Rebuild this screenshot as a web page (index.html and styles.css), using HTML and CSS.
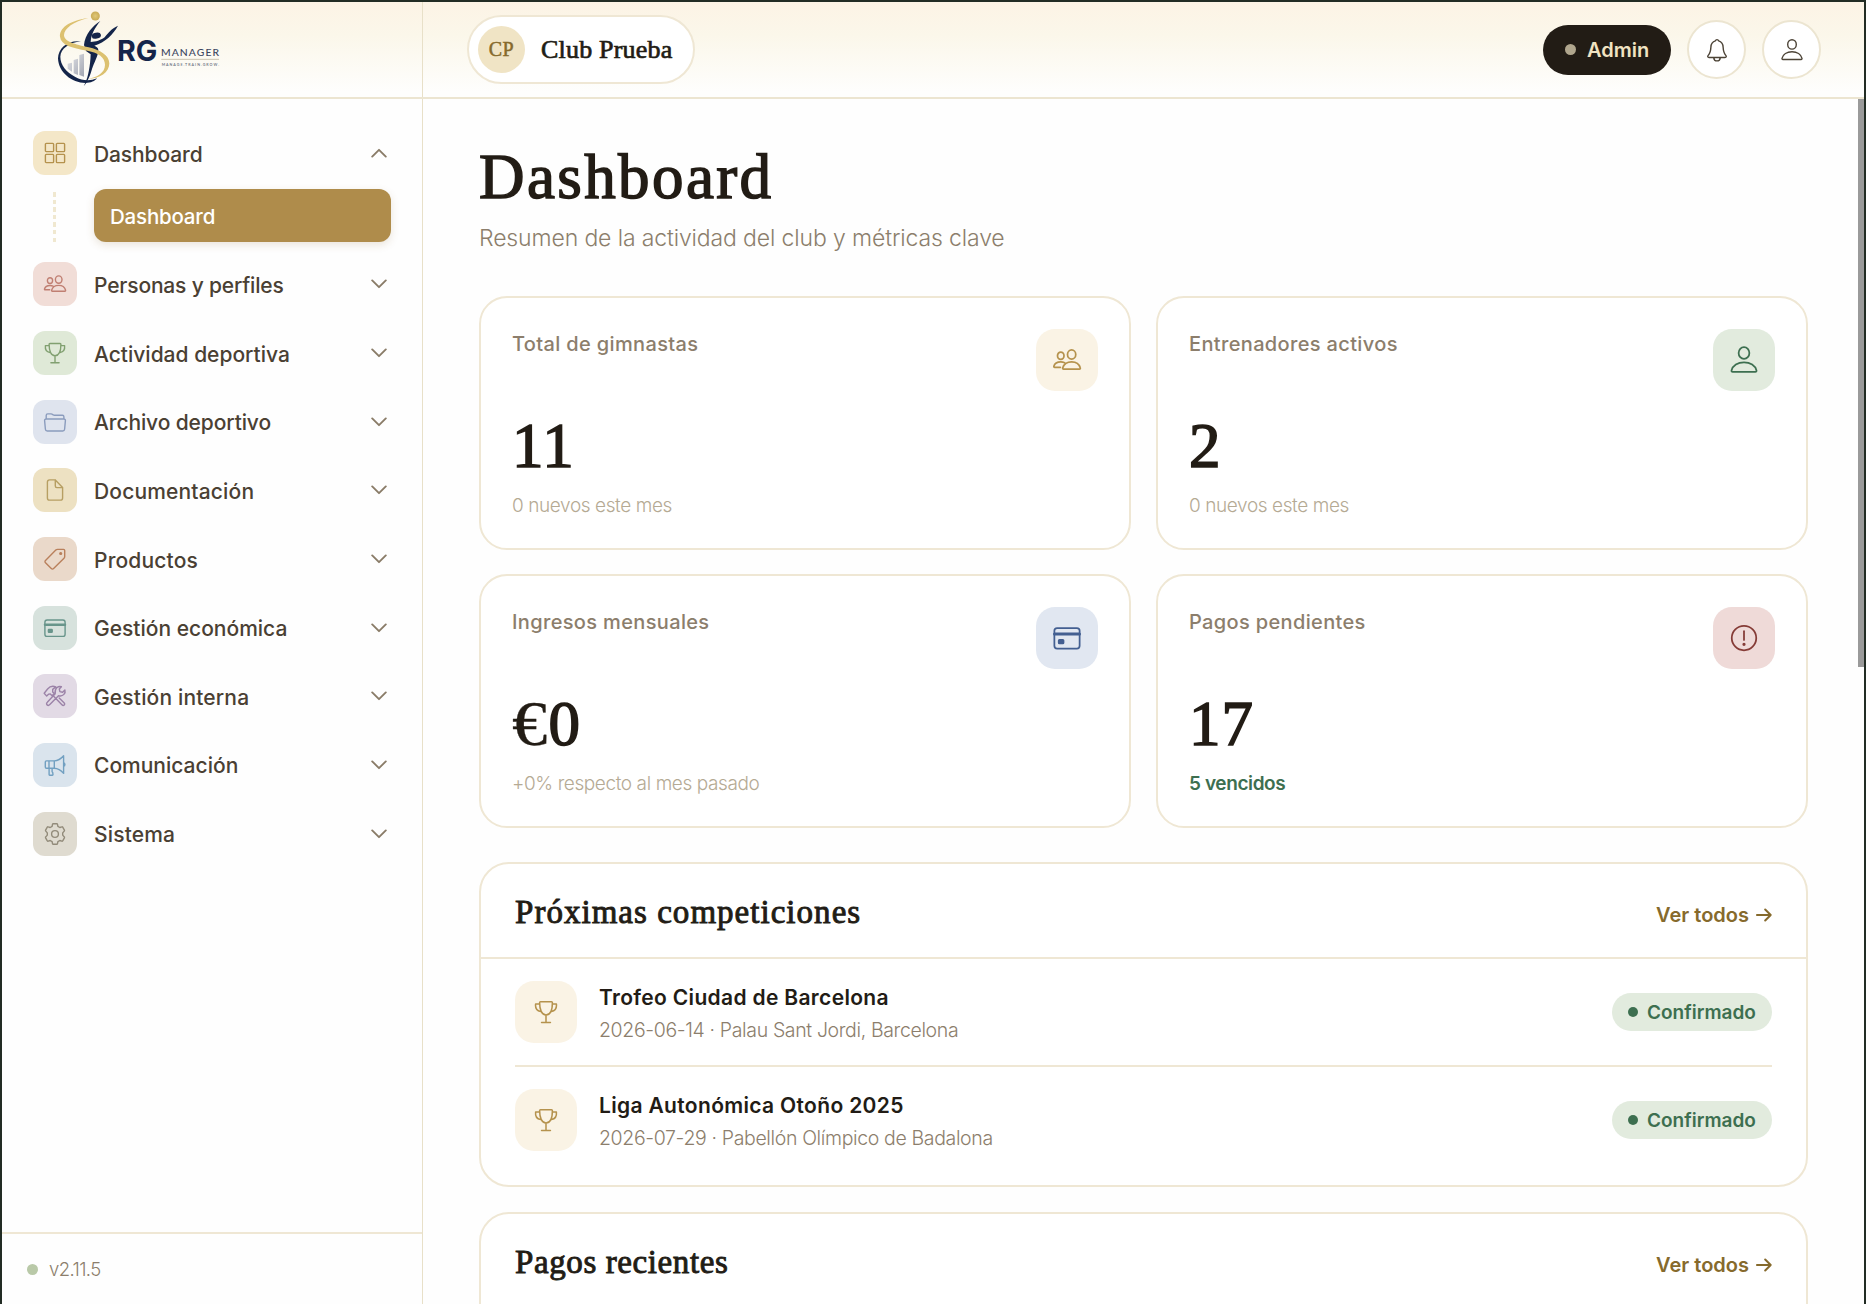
FILE: index.html
```html
<!DOCTYPE html>
<html lang="es">
<head>
<meta charset="utf-8">
<title>RG Manager · Dashboard</title>
<link rel="stylesheet" href="styles.css">
</head>
<body>
<svg width="0" height="0" class="sprite" aria-hidden="true">
  <defs>
    <symbol id="i-grid" viewBox="0 0 24 24"><rect x="2.4" y="2.4" width="8.2" height="8.2" rx=".9"/><rect x="13.4" y="2.4" width="8.2" height="8.2" rx=".9"/><rect x="2.4" y="13.4" width="8.2" height="8.2" rx=".9"/><rect x="13.4" y="13.4" width="8.2" height="8.2" rx=".9"/></symbol>
    <symbol id="i-people" viewBox="0 0 24 24"><ellipse cx="15.7" cy="7.6" rx="3.3" ry="3.7"/><ellipse cx="7" cy="8.6" rx="2.6" ry="2.9"/><path d="M9.3 19.2c-.6 0-.9-.4-.7-1 .9-2.900 3.700-4.800 7.100-4.800s6.100 1.900 6.900 4.800c.2.600-.1 1-.7 1zM10.100 14.200a7 7 0 0 0-3.100-.7c-2.700 0-4.900 1.400-5.500 3.500-.1.500.1.800.6.800h4.600"/></symbol>
    <symbol id="i-person" viewBox="0 0 24 24"><ellipse cx="12" cy="6.400" rx="4.300" ry="4.700"/><path d="M2.900 21.500c-.7 0-1-.5-.9-1.100.9-3.900 5-6.600 10-6.600s9.100 2.700 10 6.600c.1.600-.2 1.100-.9 1.100z"/></symbol>
    <symbol id="i-trophy" viewBox="0 0 24 24"><path d="M6.100 3.300c0-.5.300-.8.800-.8h10.200c.5 0 .8.300.8.800 0 6.500-1.900 11.500-5.900 11.500S6.100 9.800 6.100 3.300zM12 14.800v6.900M7.900 21.700h8.200M6.200 4.600H2.400C2 8.300 3.600 11 7 11.500M17.800 4.600h3.800c.4 3.700-1.200 6.400-4.600 6.900"/></symbol>
    <symbol id="i-folder" viewBox="0 0 24 24"><path d="M3.200 9V5.400c0-.9.600-1.500 1.500-1.500h3.400c.6 0 .9.100 1.400.5l.6.400c.4.300.8.400 1.300.4h8c.9 0 1.500.6 1.500 1.500V9M3.100 9h17.800c1 0 1.600.7 1.500 1.600l-.8 8.700c-.1 1.100-.8 1.700-1.800 1.700H4.200c-1 0-1.700-.6-1.800-1.700l-.8-8.700C1.500 9.700 2.100 9 3.100 9z"/></symbol>
    <symbol id="i-doc" viewBox="0 0 24 24"><path d="M12.300 1.900H6.600c-1.300 0-2.200.9-2.200 2.200v15.800c0 1.300.9 2.200 2.200 2.200h10.800c1.300 0 2.200-.9 2.200-2.200V9.600zM12.300 1.900v6.200c0 .9.600 1.500 1.500 1.500h5.800z"/></symbol>
    <symbol id="i-tag" viewBox="0 0 24 24"><path d="M21.700 3.500v6.100c0 .8-.2 1.200-.7 1.700L10.600 21.600c-.7.700-1.600.7-2.300 0l-5.800-5.800c-.7-.7-.7-1.600 0-2.300L12.800 3.100c.5-.5.900-.7 1.700-.7h6.100c.7 0 1.100.4 1.100 1.100z"/><circle cx="17.700" cy="6.500" r=".9" class="solid"/></symbol>
    <symbol id="i-card" viewBox="0 0 24 24"><rect x="1.900" y="4" width="20.200" height="16.400" rx="2.200"/><path d="M2 8.700h20" class="bold"/><rect x="5.400" y="13.500" width="3.800" height="2.700" rx=".5" class="solid"/></symbol>
    <symbol id="i-tools" viewBox="0 0 24 24"><path d="M1.200 9.300 4.600 5c2.100-2.500 5-3.400 8.200-2.100L9.700 5.400v2.500l1.600 1.700-2.200 2.200L7.300 10l-1.500.1-2.100 2zM9.700 11.300l9.200 9.500c.8.800 1.600.9 2.300.2s.6-1.500-.2-2.300L16.200 14M12.200 9.700c-.4-2.700.1-4.700 1.600-6 1.400-1.200 3-1.500 4.600-1L16.300 5l.6 2.600 2.700.6 2.300-2.300c.5 1.700.1 3.300-1 4.500-1.400 1.500-3.200 1.900-5.400 1.300l-8.700 8.900c-.9.900-1.900 1-2.700.3s-.7-1.800.2-2.700z"/></symbol>
    <symbol id="i-mega" viewBox="0 0 24 24"><path d="M3.500 7.900h7.800v7.400H3.500c-.7 0-1.200-.5-1.200-1.200V9.100c0-.7.500-1.200 1.200-1.200zM11.300 7.900c3.400-.2 6.500-2 9.300-5.200v17.700c-2.800-3.200-5.900-5-9.300-5.100M20.700 9.900c1.600.2 1.600 3.200 0 3.400M6.100 15.300v6.300c0 .4.200.6.600.6h2.700c.4 0 .6-.2.600-.6l-.3-2.200-.6-.6v-3.500M6 8v7.300"/></symbol>
    <symbol id="i-gear" viewBox="0 0 24 24"><circle cx="12" cy="12" r="3.400"/><path d="M10.300 1.700h3.400c.5 0 .7.200.8.700l.4 2 1.900 1.100 2-.7c.4-.2.700 0 .9.400l1.700 2.900c.2.400.2.700-.2 1l-1.500 1.800v2.200l1.500 1.800c.4.300.4.600.2 1l-1.700 2.900c-.2.400-.5.600-.9.400l-2-.7-1.900 1.100-.4 2c-.1.500-.3.700-.8.700h-3.400c-.5 0-.7-.2-.8-.7l-.4-2-1.900-1.100-2 .7c-.4.200-.7 0-.9-.4l-1.700-2.900c-.2-.4-.2-.7.200-1l1.500-1.800v-2.200L2.800 9.100c-.4-.3-.4-.6-.2-1l1.700-2.900c.2-.4.500-.6.900-.4l2 .7 1.900-1.100.4-2c.1-.5.300-.7.800-.7z"/></symbol>
    <symbol id="i-alert" viewBox="0 0 24 24"><circle cx="12" cy="12" r="9.800"/><path d="M12 6.500v7"/><circle cx="12" cy="17" r=".6" class="solid"/></symbol>
    <symbol id="i-bell" viewBox="0 0 24 24"><path d="M12 1.600c.8 0 1.400.5 1.600 1.200 2.900.8 4.400 3.100 4.500 6.300.2 4 .8 6.200 2.700 8.300.9 1 .5 2.100-.8 2.100H4c-1.300 0-1.700-1.100-.8-2.100 1.900-2.100 2.500-4.300 2.700-8.300.1-3.200 1.600-5.500 4.500-6.300.2-.7.800-1.200 1.600-1.200zM8.700 19.600c.2 2 1.500 3.300 3.300 3.300s3.100-1.300 3.300-3.300"/></symbol>
    <symbol id="i-down" viewBox="0 0 16 10"><path d="M1.200 1.400 8 8.200l6.800-6.800"/></symbol>
    <symbol id="i-up" viewBox="0 0 16 10"><path d="M1.200 8.600 8 1.800l6.800 6.800"/></symbol>
    <symbol id="i-arrow" viewBox="0 0 16 14"><path d="M.9 7h13.800M9.200 1.500 14.700 7l-5.500 5.500"/></symbol>
  </defs>
</svg>

<div class="app">
  <header class="topbar">
    <div class="brand">
      <svg class="logo" viewBox="165 30 504 237" role="img" aria-label="RG Manager">
        <defs>
          <linearGradient id="bars" x1="0" y1="0" x2="1" y2="1"><stop offset="0" stop-color="#e3e4e8"/><stop offset="1" stop-color="#a3a7b2"/></linearGradient>
          <radialGradient id="ball"><stop offset="0" stop-color="#e0c878"/><stop offset="1" stop-color="#c9ab55"/></radialGradient>
        </defs>
        <path fill="url(#bars)" d="M203 191l13-3v27l-13-9zM221 180l13-4v49l-13-5zM238 165l14-4v69l-14-5z"/>
        <path fill="#14254a" d="M243 124C202 120 175 144 174 175c1 42 42 74 82 74 17 0 29-6 35-14-20 9-44 8-65-4-27-15-45-36-45-61 1-24 27-42 62-46z"/>
        <path fill="#14254a" d="M301 63c-23 14-46 41-49 72l6 18 14 10c-1 35-8 68-15 83l-6 13c12-13 20-34 25-52 6-19 18-37 19-57 0-7-6-10-12-13 33-11 55-32 71-60-21 10-28 20-40 35-14 10-25 13-42 14 1-22 12-42 29-63z"/>
        <ellipse cx="289" cy="107" rx="14" ry="9" transform="rotate(-12 289 107)" fill="#14254a"/>
        <path fill="#dcc170" d="M265 54c-60 8-87 32-85 56 3 25 35 34 82 42 34 6 53 20 53 42 0 24-23 38-53 43 38-1 66-19 66-47-1-25-28-40-62-48-41-9-74-17-74-37 1-20 28-40 73-51z"/>
        <circle cx="286" cy="48" r="13.500" fill="url(#ball)"/>
        <text x="351" y="183" class="logo-rg" textLength="121" lengthAdjust="spacingAndGlyphs">RG</text>
        <text x="483" y="168" class="logo-name" textLength="174" lengthAdjust="spacing">MANAGER</text>
        <path d="M485 178h171" stroke="#c9c3b0" stroke-width="3"/>
        <text x="485" y="198" class="logo-tag" textLength="172" lengthAdjust="spacing">MANAGE.TRAIN.GROW.</text>
      </svg>
    </div>
    <div class="topbar-main">
      <div class="club"><span class="club-avatar">CP</span><span class="club-name">Club Prueba</span></div>
      <div class="actions">
        <span class="role"><i class="role-dot"></i><span class="role-text">Admin</span></span>
        <button class="round"><svg class="ic"><use href="#i-bell"/></svg></button>
        <button class="round"><svg class="ic"><use href="#i-person"/></svg></button>
      </div>
    </div>
  </header>

  <aside class="sidebar">
    <nav class="nav">
      <div class="item open"><span class="tile t-gold"><svg class="ic"><use href="#i-grid"/></svg></span><span class="label snug-s">Dashboard</span><svg class="chev"><use href="#i-up"/></svg></div>
      <div class="sub"><span class="rail"></span><a class="sub-link">Dashboard</a></div>
      <div class="item"><span class="tile t-rose"><svg class="ic"><use href="#i-people"/></svg></span><span class="label snug">Personas y perfiles</span><svg class="chev"><use href="#i-down"/></svg></div>
      <div class="item"><span class="tile t-green"><svg class="ic"><use href="#i-trophy"/></svg></span><span class="label">Actividad deportiva</span><svg class="chev"><use href="#i-down"/></svg></div>
      <div class="item"><span class="tile t-blue"><svg class="ic"><use href="#i-folder"/></svg></span><span class="label snug-s">Archivo deportivo</span><svg class="chev"><use href="#i-down"/></svg></div>
      <div class="item"><span class="tile t-sand"><svg class="ic"><use href="#i-doc"/></svg></span><span class="label airy">Documentación</span><svg class="chev"><use href="#i-down"/></svg></div>
      <div class="item"><span class="tile t-clay"><svg class="ic"><use href="#i-tag"/></svg></span><span class="label airy">Productos</span><svg class="chev"><use href="#i-down"/></svg></div>
      <div class="item"><span class="tile t-teal"><svg class="ic"><use href="#i-card"/></svg></span><span class="label">Gestión económica</span><svg class="chev"><use href="#i-down"/></svg></div>
      <div class="item"><span class="tile t-plum"><svg class="ic"><use href="#i-tools"/></svg></span><span class="label airy">Gestión interna</span><svg class="chev"><use href="#i-down"/></svg></div>
      <div class="item"><span class="tile t-sky"><svg class="ic"><use href="#i-mega"/></svg></span><span class="label">Comunicación</span><svg class="chev"><use href="#i-down"/></svg></div>
      <div class="item"><span class="tile t-stone"><svg class="ic"><use href="#i-gear"/></svg></span><span class="label airy">Sistema</span><svg class="chev"><use href="#i-down"/></svg></div>
    </nav>
    <footer class="version"><i class="version-dot"></i><span>v2.11.5</span></footer>
  </aside>

  <main class="content">
    <h1 class="title">Dashboard</h1>
    <p class="subtitle">Resumen de la actividad del club y métricas clave</p>

    <section class="stats">
      <article class="card"><div class="card-top"><span class="card-label">Total de gimnastas</span><span class="badge-icon b-gold"><svg class="ic"><use href="#i-people"/></svg></span></div><div class="value">11</div><div class="hint">0 nuevos este mes</div></article>
      <article class="card"><div class="card-top"><span class="card-label">Entrenadores activos</span><span class="badge-icon b-green"><svg class="ic"><use href="#i-person"/></svg></span></div><div class="value">2</div><div class="hint">0 nuevos este mes</div></article>
      <article class="card"><div class="card-top"><span class="card-label">Ingresos mensuales</span><span class="badge-icon b-blue"><svg class="ic"><use href="#i-card"/></svg></span></div><div class="value"><span class="currency">€</span>0</div><div class="hint">+0% respecto al mes pasado</div></article>
      <article class="card"><div class="card-top"><span class="card-label">Pagos pendientes</span><span class="badge-icon b-red"><svg class="ic"><use href="#i-alert"/></svg></span></div><div class="value">17</div><div class="hint hint-green">5 vencidos</div></article>
    </section>

    <section class="panel">
      <div class="panel-head"><h2 class="panel-title">Próximas competiciones</h2><a class="more"><span>Ver todos</span><svg class="arrow"><use href="#i-arrow"/></svg></a></div>
      <div class="rows">
        <div class="row"><span class="badge-icon b-gold small"><svg class="ic"><use href="#i-trophy"/></svg></span><div class="row-text"><div class="row-title">Trofeo Ciudad de Barcelona</div><div class="row-sub">2026-06-14 · Palau Sant Jordi, Barcelona</div></div><span class="status"><i class="status-dot"></i>Confirmado</span></div>
        <div class="row"><span class="badge-icon b-gold small"><svg class="ic"><use href="#i-trophy"/></svg></span><div class="row-text"><div class="row-title">Liga Autonómica Otoño 2025</div><div class="row-sub">2026-07-29 · Pabellón Olímpico de Badalona</div></div><span class="status"><i class="status-dot"></i>Confirmado</span></div>
      </div>
    </section>

    <section class="panel panel-last">
      <div class="panel-head"><h2 class="panel-title compact">Pagos recientes</h2><a class="more"><span>Ver todos</span><svg class="arrow"><use href="#i-arrow"/></svg></a></div>
    </section>
    <span class="scrollbar"></span>
  </main>
</div>
</body>
</html>
```
FILE: styles.css
```css
* { box-sizing: border-box; }
:root {
  --line: #efe7d4;
  --line-strong: #ece5d1;
  --ink: #221c15;
  --muted: #8c7e6c;
  --serif: "Liberation Serif", serif;
}
html, body { height: 100%; }
body {
  margin: 0;
  overflow: hidden;
  background: #fefefe;
  color: var(--ink);
  font-family: Inter, sans-serif;
}
.sprite { position: absolute; }
h1, h2, p { margin: 0; }
.app {
  display: grid;
  grid-template: 97px minmax(0, 1fr) / 421px minmax(0, 1fr);
  height: 1304px;
  overflow: hidden;
  border: 2px solid #222c24;
  border-bottom: 0;
}
.ic { width: 24px; height: 24px; }
svg { fill: none; stroke: currentColor; stroke-width: 1.4; stroke-linecap: round; stroke-linejoin: round; display: block; overflow: visible; }
.solid { fill: currentColor; }
.bold { stroke-width: 2.4; }

/* Top bar */
.topbar {
  grid-column: 1 / 3;
  display: flex;
  border-bottom: 2px solid var(--line-strong);
  background: linear-gradient(#fcf3e5, #fbf7ea 35%, #fefefd 95%);
}
.brand { width: 421px; border-right: 1px solid #e8e0c8; padding: 8px 0 0 53px; }
.logo { width: 168px; height: 79px; stroke: none; }
.logo-rg { font: 700 85px Inter, sans-serif; fill: #14254a; }
.logo-name { font: 500 31px Lato, sans-serif; fill: #3a4560; }
.logo-tag { font: 600 11px Lato, sans-serif; fill: #6a7080; }
.topbar-main { flex: 1; display: flex; justify-content: space-between; align-items: center; padding: 0 43px 0 44px; }
.club {
  display: flex;
  align-items: center;
  gap: 16px;
  width: 228px;
  height: 69px;
  padding-left: 9px;
  border: 2px solid var(--line);
  border-radius: 35px;
  background: #fff;
}
.club-avatar {
  width: 47px;
  height: 47px;
  border-radius: 50%;
  background: #f0e4c5;
  color: #866a2c;
  font: 400 20px/47px var(--serif);
  -webkit-text-stroke: .5px;
  letter-spacing: .4px;
  text-align: center;
}
.club-name { font: 400 26px/40px var(--serif); -webkit-text-stroke: .7px; letter-spacing: .2px; white-space: nowrap; }
.actions { display: flex; align-items: center; gap: 16px; }
.role {
  display: flex;
  align-items: center;
  gap: 11px;
  width: 128px;
  height: 50px;
  padding-left: 22px;
  border-radius: 25px;
  background: #221c15;
  color: #f0e3c2;
  font-size: 20px;
  font-weight: 600;
}
.role-dot { width: 11px; height: 11px; border-radius: 50%; background: #b0a68d; }
.round {
  display: grid;
  place-items: center;
  width: 59px;
  height: 59px;
  padding: 0;
  border: 2px solid var(--line-strong);
  border-radius: 50%;
  background: #fff;
  color: #4c4336;
}

/* Sidebar */
.sidebar { display: flex; flex-direction: column; border-right: 1px solid #e8e0c8; }
.nav { flex: 1; display: flex; flex-direction: column; gap: 24.65px; padding: 32.4px 31px 0 31px; }
.item { display: flex; align-items: center; height: 44px; color: #4a4033; }
.item.open { margin-bottom: -10.6px; }
.tile { display: grid; place-items: center; width: 44px; height: 44px; border-radius: 12px; margin-right: 17px; }
.label { flex: 1; font-size: 21px; line-height: 28px; font-weight: 500; padding-top: 3px; white-space: nowrap; }
.snug { letter-spacing: -.18px; }
.snug-s { letter-spacing: -.11px; }
.airy { letter-spacing: .16px; }
.chev { width: 16px; height: 10px; margin-right: 3.6px; color: #8a7c68; stroke-width: 1.9; }
.t-gold { background: #f4e7c8; color: #b5924d; }
.t-rose { background: #f1ddd7; color: #c07f72; }
.t-green { background: #dfe9d7; color: #81a070; }
.t-blue { background: #dfe4ee; color: #8b9cbd; }
.t-sand { background: #ede1c2; color: #b79f63; }
.t-clay { background: #ead9ca; color: #b9805c; }
.t-teal { background: #d7e2dd; color: #68958b; }
.t-plum { background: #e2dae5; color: #9c83a8; }
.t-sky { background: #dae4ed; color: #72a0c1; }
.t-stone { background: #dfdbd0; color: #928b7a; }
.sub { display: flex; height: 53px; margin-bottom: -4.6px; }
.rail {
  width: 3px;
  height: 50px;
  margin: 3px 38px 0 20px;
  background: repeating-linear-gradient(#f0e8d0 0 4.5px, transparent 4.5px 7.6px);
}
.sub-link {
  flex: 1;
  padding: 13px 16px;
  border-radius: 12px;
  background: #af8c4b;
  color: #fff;
  font-size: 20.5px;
  line-height: 30px;
  font-weight: 500;
  letter-spacing: -.2px;
  box-shadow: 0 3px 9px rgba(130, 95, 35, .16);
}
.version { display: flex; align-items: center; gap: 11px; height: 72px; padding-left: 25px; border-top: 2px solid var(--line); color: var(--muted); font-size: 18.5px; font-weight: 300; letter-spacing: -.6px; }
.version-dot { width: 11px; height: 11px; border-radius: 50%; background: #b9c9a8; }

/* Content */
.content { position: relative; padding: 46px 56px 0 56px; overflow: hidden; }
.title { font: 400 63px/66px var(--serif); -webkit-text-stroke: 1.5px; letter-spacing: 2.4px; margin-top: -1px; }
.subtitle { margin-top: 13px; color: var(--muted); font-size: 23px; line-height: 30px; font-weight: 300; letter-spacing: -.13px; white-space: nowrap; }
.stats { display: grid; grid-template-columns: 1fr 1fr; gap: 24px 25px; margin-top: 43px; }
.card { height: 254px; padding: 31px; border: 2px solid var(--line); border-radius: 28px; background: #fff; }
.card-top { display: flex; justify-content: space-between; height: 63px; }
.card-label { padding-top: 2px; font-size: 20px; line-height: 26px; font-weight: 500; letter-spacing: .35px; color: var(--muted); }
.badge-icon { display: grid; place-items: center; flex: none; width: 62px; height: 62px; border-radius: 19px; }
.badge-icon .ic { width: 30px; height: 30px; }
.badge-icon.small .ic { width: 26px; height: 26px; }
.b-gold { background: #faf3e5; color: #b5924d; }
.b-green { background: #e2ebde; color: #3d6f50; }
.b-blue { background: #e1e7f1; color: #435f91; }
.b-red { background: #efdad8; color: #853b36; }
.value { margin-top: 23px; font: 400 63px/62px var(--serif); -webkit-text-stroke: 1.6px; letter-spacing: 1px; }
.currency { display: inline-block; transform: scaleX(1.12); transform-origin: left; margin-right: 4px; -webkit-text-stroke: .3px; }
.hint { margin-top: 16px; font-size: 19px; line-height: 26px; font-weight: 300; letter-spacing: -.4px; color: #b5aa94; }
.hint-green { color: #3d6f50; font-weight: 600; }
.panel { margin-top: 34px; border: 2px solid var(--line); border-radius: 30px; background: #fff; }
.panel + .panel { margin-top: 25px; }
.panel-last { height: 200px; }
.panel-head { display: flex; justify-content: space-between; padding: 28px 34px 25px 34px; border-bottom: 2px solid var(--line); }
.panel-title { font: 400 33px/40px var(--serif); -webkit-text-stroke: .9px; letter-spacing: 1.03px; }
.panel-title.compact { letter-spacing: .6px; }
.more { display: flex; align-items: center; gap: 7px; padding-top: 5px; color: #866a2c; font-size: 20px; font-weight: 600; }
.arrow { width: 16px; height: 14px; stroke-width: 2; }
.rows { padding: 0 34px 12px 34px; }
.row { display: flex; align-items: center; height: 106px; }
.row + .row { height: 108px; border-top: 2px solid var(--line); }
.row-text { flex: 1; margin-left: 22px; padding-top: 3px; }
.row-title { font-size: 21px; line-height: 28px; font-weight: 600; letter-spacing: .33px; }
.row-sub { margin-top: 4px; font-size: 19.5px; line-height: 28px; font-weight: 300; letter-spacing: -.36px; color: var(--muted); }
.status { display: flex; align-items: center; gap: 9px; width: 160px; height: 38px; padding-left: 16px; border-radius: 19px; background: #e2ebde; color: #3d6f50; font-size: 19px; font-weight: 600; }
.status-dot { width: 10px; height: 10px; border-radius: 50%; background: #3d6f50; }
.scrollbar { position: absolute; top: 0; right: 0; width: 6px; height: 568px; background: #9a9a9a; }
```
